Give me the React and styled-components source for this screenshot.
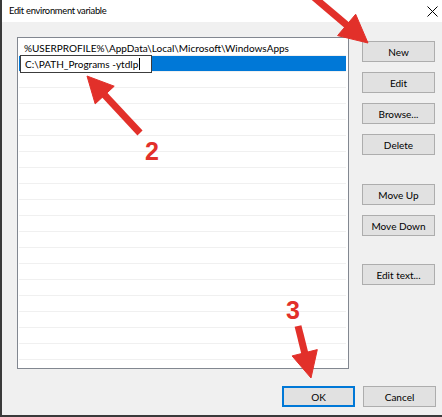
import React from 'react';
import styled, { createGlobalStyle } from 'styled-components';

const GlobalStyle = createGlobalStyle`
  html, body { margin: 0; padding: 0; background: #fff; }
  body { font-family: Lato, "Noto Sans", sans-serif; }
`;

const paths = [
    '%USERPROFILE%\\AppData\\Local\\Microsoft\\WindowsApps',
];
const EMPTY_ROWS = 18;

const Window = styled.div`
    position: relative;
    width: 442px;
    height: 417px;
    box-sizing: border-box;
    background: #f0f0f0;
    border-left: 2px solid #3a3a3a;
    border-bottom: 2px solid #3a3a3a;
    display: flex;
    flex-direction: column;
    font-size: 10px;
    color: #000;
    overflow: hidden;
  `;
const TitleBar = styled.div`
    height: 22px;
    background: #fff;
    display: flex;
    align-items: center;
    justify-content: space-between;
    padding: 0 4px 0 7px;
  `;
const Title = styled.span`
    font-size: 9.4px;
    letter-spacing: -0.3px;
    line-height: 1;
  `;
const Body = styled.div`
    display: flex;
    gap: 13px;
    padding: 15px 0 0 15px;
  `;
const ListBox = styled.div`
    width: 332px;
    height: 332px;
    box-sizing: border-box;
    background: #fff;
    border: 1px solid #828790;
    padding: 2px 2px 0 1px;
    overflow: hidden;
  `;
const Row = styled.div`
    height: 16px;
    box-sizing: border-box;
    border-bottom: 1px solid #f0f0f0;
    display: flex;
    align-items: center;
    padding-left: ${p => (p.selected ? '0' : '5px')};
    background: ${p => (p.selected ? '#0078d7' : 'transparent')};
    white-space: nowrap;
  `;
const EditField = styled.div`
    height: 18px;
    width: 132px;
    box-sizing: border-box;
    background: #fff;
    border: 1px solid #3c3c3c;
    display: flex;
    align-items: center;
    padding: 0 0 0 4px;
    margin-left: 1px;
  `;
const Caret = styled.span`
    display: inline-block;
    width: 1px;
    height: 12px;
    background: #000;
    margin-left: 1px;
  `;
const ButtonColumn = styled.div`
    display: flex;
    flex-direction: column;
    padding-top: 4px;
  `;
const Button = styled.button`
    width: 73px;
    height: 21px;
    box-sizing: border-box;
    background: #e1e1e1;
    border: 1px solid ${p => (p.primary ? '#0078d7' : '#adadad')};
    box-shadow: ${p => (p.primary ? 'inset 0 0 0 1px #0078d7' : 'none')};
    font-family: inherit;
    font-size: 10px;
    color: #000;
    padding: 0;
    margin-top: ${p => p.space || 0}px;
  `;
const Footer = styled.div`
    display: flex;
    justify-content: flex-end;
    gap: 8px;
    padding: 17px 6px 0 0;
  `;
const Overlay = styled.svg`
    position: absolute;
    left: -2px;
    top: 0;
    pointer-events: none;
  `;
const Callout = styled.span`
    position: absolute;
    left: ${p => p.x}px;
    top: ${p => p.y}px;
    font-family: "Liberation Sans", Arial, sans-serif;
    font-weight: bold;
    font-size: 25px;
    line-height: 1;
    color: #e2302a;
  `;

function Arrow({ tail, tip, head = 26, half = 13, width = 7 }) {
    const dx = tip[0] - tail[0];
    const dy = tip[1] - tail[1];
    const len = Math.hypot(dx, dy);
    const ux = dx / len, uy = dy / len;
    const nx = -uy, ny = ux;
    const bx = tip[0] - ux * head, by = tip[1] - uy * head;
    const pts = [
        [tip[0], tip[1]],
        [bx + nx * half, by + ny * half],
        [bx - nx * half, by - ny * half],
    ].map(p => p.join(',')).join(' ');
    return (
        <g fill="#e2302a" stroke="#e2302a">
            <line x1={tail[0]} y1={tail[1]} x2={bx + ux * 2} y2={by + uy * 2} strokeWidth={width} />
            <polygon points={pts} strokeWidth="1" strokeLinejoin="round" />
        </g>
    );
}

export default function App() {
    return (
        <>
            <GlobalStyle />
            <Window>
                <TitleBar>
                    <Title>Edit environment variable</Title>
                    <svg width="11" height="11" viewBox="0 0 11 11">
                        <path d="M0.5 0.5 L10.5 10.5 M10.5 0.5 L0.5 10.5" stroke="#000" strokeWidth="1" />
                    </svg>
                </TitleBar>
                <Body>
                    <ListBox>
                        {paths.map(p => (
                            <Row key={p}>{p}</Row>
                        ))}
                        <Row selected>
                            <EditField>
                                C:\PATH_Programs -ytdlp
                                <Caret />
                            </EditField>
                        </Row>
                        {Array.from({ length: EMPTY_ROWS }).map((_, i) => (
                            <Row key={i} />
                        ))}
                    </ListBox>
                    <ButtonColumn>
                        <Button>New</Button>
                        <Button space={10}>Edit</Button>
                        <Button space={10}>Browse...</Button>
                        <Button space={10}>Delete</Button>
                        <Button space={29}>Move Up</Button>
                        <Button space={10}>Move Down</Button>
                        <Button space={28}>Edit text...</Button>
                    </ButtonColumn>
                </Body>
                <Footer>
                    <Button primary>OK</Button>
                    <Button>Cancel</Button>
                </Footer>
                <Overlay width="442" height="417" viewBox="0 0 442 417">
                    <Arrow tail={[303, -12]} tip={[368, 43]} head={28} half={14} />
                    <Arrow tail={[140, 133]} tip={[87, 76]} />
                    <Arrow tail={[298, 326]} tip={[311, 378]} />
                </Overlay>
                <Callout x={143} y={139}>2</Callout>
                <Callout x={284} y={298}>3</Callout>
            </Window>
        </>
    );
}
